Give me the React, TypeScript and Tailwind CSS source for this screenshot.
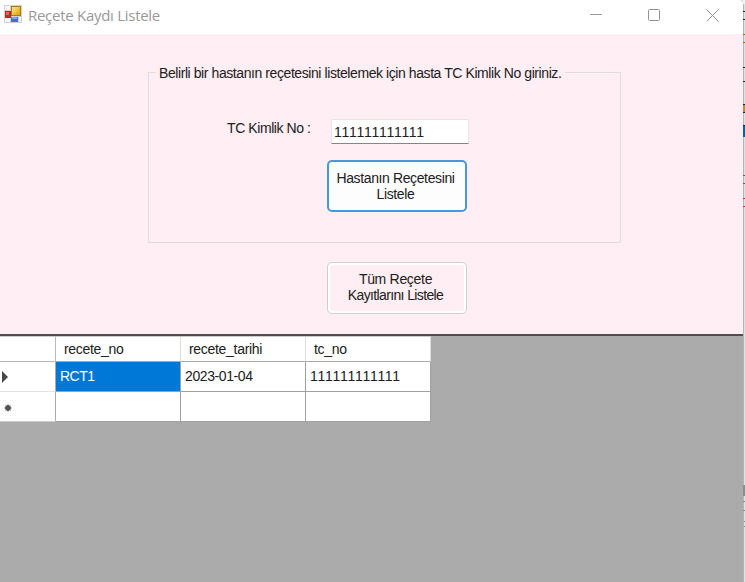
import React from "react";

const columns = ["recete_no", "recete_tarihi", "tc_no"];

function AppIcon() {
  return (
    <svg width="18" height="18" viewBox="0 0 18 18" shapeRendering="crispEdges">
      <defs>
        <linearGradient id="gold" x1="0" y1="0" x2="1" y2="1">
          <stop offset="0" stopColor="#ffe888" />
          <stop offset="1" stopColor="#dca000" />
        </linearGradient>
      </defs>
      <rect width="18" height="18" fill="#d2d2d2" />
      <rect x="1" y="1" width="5" height="4" fill="#f6f6f6" />
      <rect x="1" y="13" width="5" height="4" fill="#f6f6f6" />
      <rect x="1" y="6" width="6" height="7" fill="#b92a20" />
      <rect x="2" y="7" width="3" height="3" fill="#e4675b" />
      <rect x="7" y="1" width="10" height="10" fill="#a57a16" />
      <rect x="8" y="2" width="8" height="8" fill="url(#gold)" />
      <rect x="7" y="12" width="7" height="5" fill="#3c72d8" />
      <rect x="8" y="12" width="5" height="2" fill="#79a9f5" />
      <rect x="15" y="12" width="2" height="5" fill="#f0f0f0" />
    </svg>
  );
}

function TitleBar() {
  return (
    <header className="flex h-[34px] shrink-0 items-start bg-white pl-1 text-[#999]">
      <div className="pt-[5px]">
        <AppIcon />
      </div>
      <h1 className="ml-1.5 grow pt-[5px] font-['Open_Sans','Noto_Sans',sans-serif] text-[15px] leading-5 tracking-[-0.28px] whitespace-nowrap">
        Reçete Kaydı Listele
      </h1>
      <div className="flex gap-[46px] pt-[8px] pr-[24px]">
        <svg width="13" height="14" viewBox="0 0 13 14" stroke="#999" fill="none">
          <path d="M0 6.5h12" />
        </svg>
        <svg width="12" height="14" viewBox="0 0 12 14" stroke="#929292" fill="none" className="ml-[-1px]">
          <rect x="0.5" y="1.5" width="11" height="11" rx="1" />
        </svg>
        <svg width="13" height="14" viewBox="0 0 13 14" stroke="#929292" fill="none">
          <path d="M.5 1.5l12 12M12.5 1.5l-12 12" />
        </svg>
      </div>
    </header>
  );
}

function SearchPanel() {
  return (
    <section className="h-[300px] shrink-0 bg-[#ffeef3] pt-7 pl-[148px]">
      <fieldset className="h-[181px] w-[473px] border border-[#dedcdf]">
        <legend className="ml-[7px] h-5 w-[409px] pl-[3px] leading-[22px] tracking-[-0.42px] whitespace-nowrap">
          Belirli bir hastanın reçetesini listelemek için hasta TC Kimlik No giriniz.
        </legend>
        <div className="flex pt-[37px] pl-[78px]">
          <label htmlFor="tc" className="w-[104px] leading-[18px] tracking-[-0.42px] whitespace-nowrap">
            TC Kimlik No :
          </label>
          <input
            id="tc"
            defaultValue="111111111111"
            className="h-[25px] w-[138px] border border-[#e7e5e7] border-b-[#858585] bg-white pl-[2px] tracking-[-0.3px] outline-none [font-kerning:none]"
          />
        </div>
        <button className="mt-4 ml-[178px] h-[52px] w-[140px] rounded-[5px] border-2 border-[#4798d8] bg-[#fdfdfd] pr-[3px] leading-4 tracking-[-0.38px]">
          Hastanın Reçetesini
          <br />
          Listele
        </button>
      </fieldset>
      <button className="mt-[19px] ml-[179px] h-[52px] w-[140px] rounded-[5px] border border-[#cfcdcf] bg-[#ffeef3] pr-[3px] pb-[2px] leading-4 tracking-[-0.63px] shadow-[inset_0_0_0_2px_#fff]">
        <span className="tracking-[-0.3px]">Tüm Reçete</span>
        <br />
        Kayıtlarını Listele
      </button>
    </section>
  );
}

function ResultsGrid() {
  return (
    <section className="grow border-t-2 border-[#504c50] bg-[#ababab]">
      <div className="grid w-[431px] grid-cols-[56px_125px_125px_125px] grid-rows-[26px_30px_30px] tracking-[-0.3px]">
        <div className="border-t border-r border-b border-t-[#ccc] border-r-[#bbb] border-b-[#b5b5b5] bg-white" />
        {columns.map((name) => (
          <div
            key={name}
            className="border-t border-r border-b border-t-[#ccc] border-r-[#ddd] border-b-[#aaa] bg-white pl-2 leading-[25px]"
          >
            {name}
          </div>
        ))}
        <div className="flex items-center border-r border-b border-r-[#aaa] border-b-[#e2e2e2] bg-white pl-[2px]">
          <svg width="7" height="12" viewBox="0 0 7 12">
            <path d="M0 0l6 6-6 6z" fill="#484848" />
          </svg>
        </div>
        <div className="border-r border-b border-[#a0a0a0] bg-[#0078d7] pl-1 leading-[29px] tracking-[-0.5px] text-white">
          RCT1
        </div>
        <div className="border-r border-b border-[#a0a0a0] bg-white pl-1 leading-[29px] tracking-[-0.4px]">
          2023-01-04
        </div>
        <div className="border-r border-b border-[#a0a0a0] bg-white pl-1 leading-[29px] [font-kerning:none]">
          111111111111
        </div>
        <div className="flex items-center border-r border-b border-r-[#aaa] border-b-[#ccc] bg-white pt-[3px] pl-[4px]">
          <svg width="8" height="8" viewBox="0 0 8 8" stroke="#555" fill="#444">
            <circle cx="4" cy="4" r="2.4" />
            <path d="M4 .3v7.4M.3 4h7.4M1.3 1.3l5.4 5.4M6.7 1.3l-5.4 5.4" strokeWidth=".8" />
          </svg>
        </div>
        <div className="border-r border-b border-[#a0a0a0] bg-white" />
        <div className="border-r border-b border-[#a0a0a0] bg-white" />
        <div className="border-r border-b border-[#a0a0a0] bg-white" />
      </div>
    </section>
  );
}

// Sliver of the code editor that shows beside the window.
function BackgroundEdge() {
  return (
    <svg width="2" height="582" viewBox="0 0 2 582" shapeRendering="crispEdges">
      <rect width="2" height="582" fill="#e2e2e2" />
      <rect width="1" height="582" fill="#b4b4b4" />
      <rect y="0" width="2" height="4" fill="#f4f4f4" />
      <path d="M0 11.5h2M0 19.5h2M0 67.5h2M0 81.5h2M0 104.5h2M0 112.5h2M0 125.5h2" stroke="#222" />
      <path d="M0 34.5h2M0 42.5h2" stroke="#906536" />
      <rect y="105" width="2" height="7" fill="#b98a45" />
      <rect y="126" width="2" height="11" fill="#145d99" />
      <path d="M0 175.5h2M0 183.5h2M0 198.5h2M0 206.5h2" stroke="#ad3545" />
      <rect y="485" width="2" height="11" fill="#8d8d8d" />
      <path d="M0 501.5h2M0 510.5h2M1 521.5h1M1 526.5h1" stroke="#888" />
    </svg>
  );
}

export default function App() {
  return (
    <div className="flex h-[582px] w-[745px] overflow-hidden bg-[#e2e2e2] font-['Liberation_Sans',Arial,sans-serif] text-[14px] text-[#202020]">
      <main className="flex w-[743px] shrink-0 flex-col overflow-hidden rounded-tr-[5px]">
        <TitleBar />
        <SearchPanel />
        <ResultsGrid />
      </main>
      <BackgroundEdge />
    </div>
  );
}
